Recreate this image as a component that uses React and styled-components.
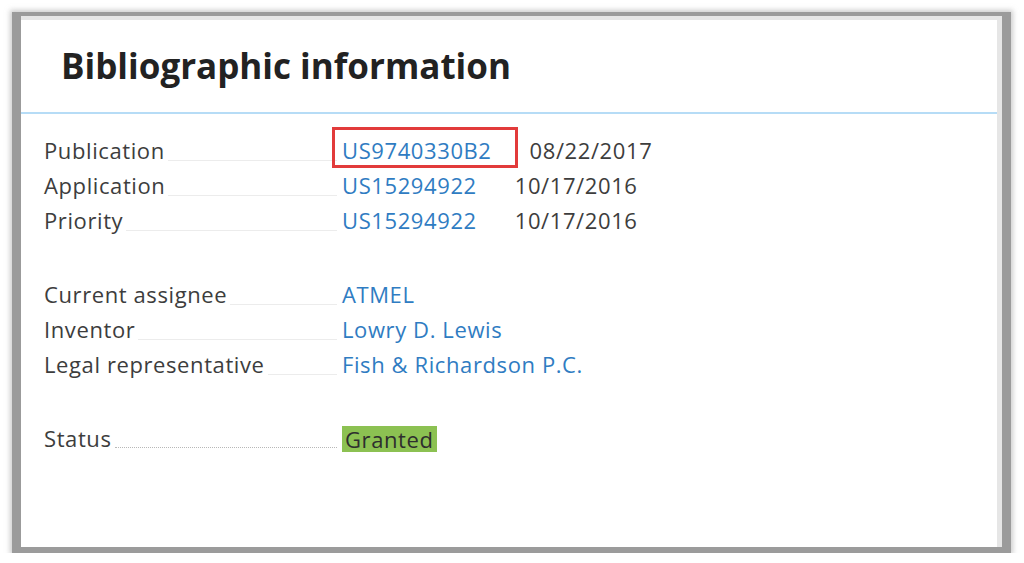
import React from 'react'
import styled, { createGlobalStyle } from 'styled-components'

const Global = createGlobalStyle`
  html, body {
    margin: 0;
    padding: 0;
    background: #ffffff;
  }
  body {
    font-family: "Open Sans", "Noto Sans", sans-serif;
  }
`

const Frame = styled.div`
  margin: 12px 0 0 12px;
  width: 981px;
  border-style: solid;
  border-color: #9b9b9b;
  border-width: 4px 9px 6px 9px;
  box-shadow: 0 0 5px 2px rgba(170, 170, 170, 0.6);
`

const Panel = styled.section`
  background: #ffffff;
  height: 527px;
  border-top: 4px solid #e6e6e6;
  border-right: 5px solid #e6e6e6;
  display: flex;
  flex-direction: column;
`

const Header = styled.header`
  padding: 22px 0 22px 40px;
  border-bottom: 2px solid #b6dcf6;
`

const Title = styled.h1`
  margin: 0;
  font-size: 35px;
  line-height: 48px;
  font-weight: 700;
  color: #222222;
`

const Body = styled.div`
  padding: 19px 0 0 23px;
  display: flex;
  flex-direction: column;
  gap: 39px;
`

const Section = styled.div`
  display: flex;
  flex-direction: column;
`

const Row = styled.div`
  display: flex;
  height: 35px;
  font-size: 22px;
  line-height: 35px;
  letter-spacing: 0.6px;
`

const Label = styled.div`
  width: 293px;
  margin-right: 5px;
  display: flex;
  align-items: flex-end;
  color: #3d3d3d;
  white-space: nowrap;
`

const Leader = styled.span`
  flex: 1;
  margin: 0 0 ${p => (p.$dotted ? 8 : 7)}px 3px;
  border-bottom: 1px ${p => (p.$dotted ? 'dotted #b8b8b8' : 'solid #ececec')};
`

const Value = styled.div`
  display: flex;
  gap: 38px;
  white-space: nowrap;
`

const Link = styled.a`
  position: relative;
  display: inline-block;
  color: #2f7cc2;
  text-decoration: none;
`

const Marker = styled.span`
  position: absolute;
  left: -10px;
  right: -26px;
  top: -6px;
  bottom: 0;
  border: 3px solid #e23b3b;
  pointer-events: none;
`

const DateText = styled.span`
  color: #3d3d3d;
`

const Badge = styled.span`
  display: inline-block;
  align-self: center;
  height: 26px;
  line-height: 26px;
  padding: 0 3px 0 3px;
  background: #8cc152;
  color: #2e2e2e;
`

const sections = [
  [
    { label: 'Publication', link: 'US9740330B2', date: '08/22/2017', marked: true },
    { label: 'Application', link: 'US15294922', date: '10/17/2016' },
    { label: 'Priority', link: 'US15294922', date: '10/17/2016' },
  ],
  [
    { label: 'Current assignee', link: 'ATMEL' },
    { label: 'Inventor', link: 'Lowry D. Lewis' },
    { label: 'Legal representative', link: 'Fish & Richardson P.C.' },
  ],
]

export default function App() {
  return (
    <>
      <Global />
      <Frame>
        <Panel>
          <Header>
            <Title>Bibliographic information</Title>
          </Header>
          <Body>
            {sections.map((rows, i) => (
              <Section key={i}>
                {rows.map(r => (
                  <Row key={r.label}>
                    <Label>
                      {r.label}
                      <Leader />
                    </Label>
                    <Value>
                      <Link href="#">
                        {r.link}
                        {r.marked && <Marker />}
                      </Link>
                      {r.date && <DateText>{r.date}</DateText>}
                    </Value>
                  </Row>
                ))}
              </Section>
            ))}
            <Section>
              <Row>
                <Label>
                  Status
                  <Leader $dotted />
                </Label>
                <Value>
                  <Badge>Granted</Badge>
                </Value>
              </Row>
            </Section>
          </Body>
        </Panel>
      </Frame>
    </>
  )
}
